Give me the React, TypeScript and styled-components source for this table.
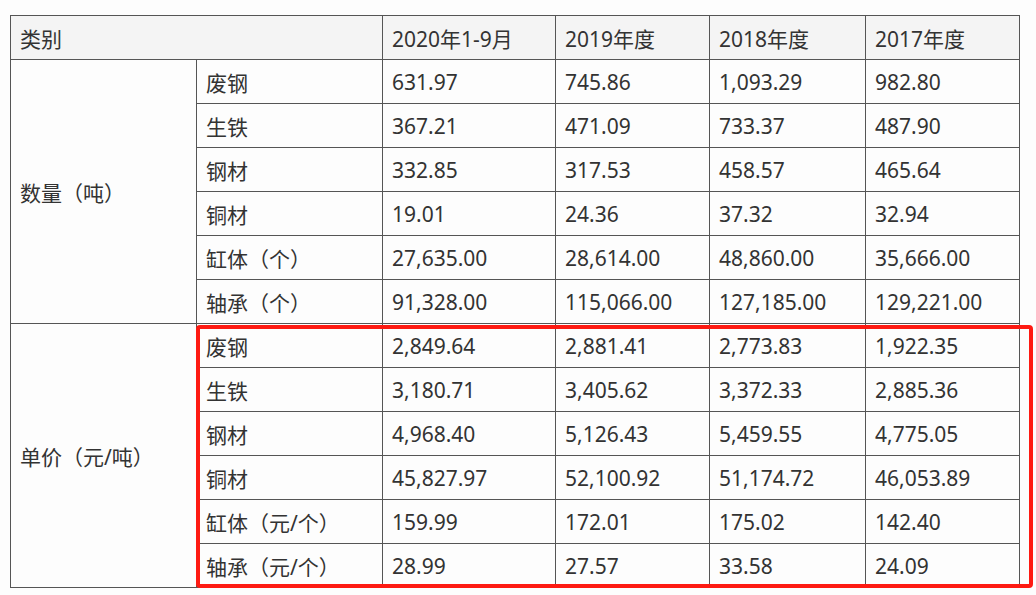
import { styled, createGlobalStyle } from 'styled-components';

const GlobalStyle = createGlobalStyle`
  html, body {
    margin: 0;
    padding: 0;
    background: #fdfdfd;
  }
  body {
    font-family: "Noto Sans", "Noto Sans CJK SC", sans-serif;
    color: #333;
  }
`;

const years = ['2020年1-9月', '2019年度', '2018年度', '2017年度'];
const colWidths = [186, 186, 173, 154, 156, 154];

type Row = { name: string; values: string[] };

const quantity: Row[] = [
  { name: '废钢', values: ['631.97', '745.86', '1,093.29', '982.80'] },
  { name: '生铁', values: ['367.21', '471.09', '733.37', '487.90'] },
  { name: '钢材', values: ['332.85', '317.53', '458.57', '465.64'] },
  { name: '铜材', values: ['19.01', '24.36', '37.32', '32.94'] },
  { name: '缸体（个）', values: ['27,635.00', '28,614.00', '48,860.00', '35,666.00'] },
  { name: '轴承（个）', values: ['91,328.00', '115,066.00', '127,185.00', '129,221.00'] },
];

const price: Row[] = [
  { name: '废钢', values: ['2,849.64', '2,881.41', '2,773.83', '1,922.35'] },
  { name: '生铁', values: ['3,180.71', '3,405.62', '3,372.33', '2,885.36'] },
  { name: '钢材', values: ['4,968.40', '5,126.43', '5,459.55', '4,775.05'] },
  { name: '铜材', values: ['45,827.97', '52,100.92', '51,174.72', '46,053.89'] },
  { name: '缸体（元/个）', values: ['159.99', '172.01', '175.02', '142.40'] },
  { name: '轴承（元/个）', values: ['28.99', '27.57', '33.58', '24.09'] },
];

const groups = [
  { label: '数量（吨）', rows: quantity },
  { label: '单价（元/吨）', rows: price },
];

const App = () => {
  return (
    <Page>
      <GlobalStyle />
      <TableWrap>
        <DataTable>
          <colgroup>
            {colWidths.map((w, i) => (
              <Col key={i} $width={w} />
            ))}
          </colgroup>
          <thead>
            <tr>
              <HeadCell colSpan={2}>类别</HeadCell>
              {years.map((y) => (
                <HeadCell key={y}>{y}</HeadCell>
              ))}
            </tr>
          </thead>
          <tbody>
            {groups.map((g) =>
              g.rows.map((r, i) => (
                <tr key={g.label + r.name}>
                  {i === 0 && <Cell rowSpan={g.rows.length}>{g.label}</Cell>}
                  <Cell>{r.name}</Cell>
                  {r.values.map((v, j) => (
                    <Cell key={j}>{v}</Cell>
                  ))}
                </tr>
              )),
            )}
          </tbody>
        </DataTable>
        <Highlight />
      </TableWrap>
    </Page>
  );
};

export default App;

const Page = styled.div`
  padding: 15px 0 0 10px;
`;

const TableWrap = styled.div`
  position: relative;
  width: 1010px;
`;

const DataTable = styled.table`
  border-collapse: collapse;
  table-layout: fixed;
  width: 1009px;
  font-size: 21px;
`;

const Col = styled.col<{ $width: number }>`
  width: ${(p) => p.$width}px;
`;

const HeadCell = styled.th`
  height: 43px;
  padding: 0 0 0 9px;
  border: 1px solid #555;
  background: #f4f4f4;
  font-weight: 400;
  text-align: left;
  white-space: nowrap;
`;

const Cell = styled.td`
  height: 43px;
  padding: 0 0 0 9px;
  border: 1px solid #555;
  background: #fdfdfd;
  text-align: left;
  white-space: nowrap;
`;

// red annotation box drawn over the unit-price rows
const Highlight = styled.div`
  position: absolute;
  left: 186px;
  top: 310px;
  width: 837px;
  height: 263px;
  box-sizing: border-box;
  border: 4px solid #fe1a12;
  border-radius: 4px;
  pointer-events: none;
`;
